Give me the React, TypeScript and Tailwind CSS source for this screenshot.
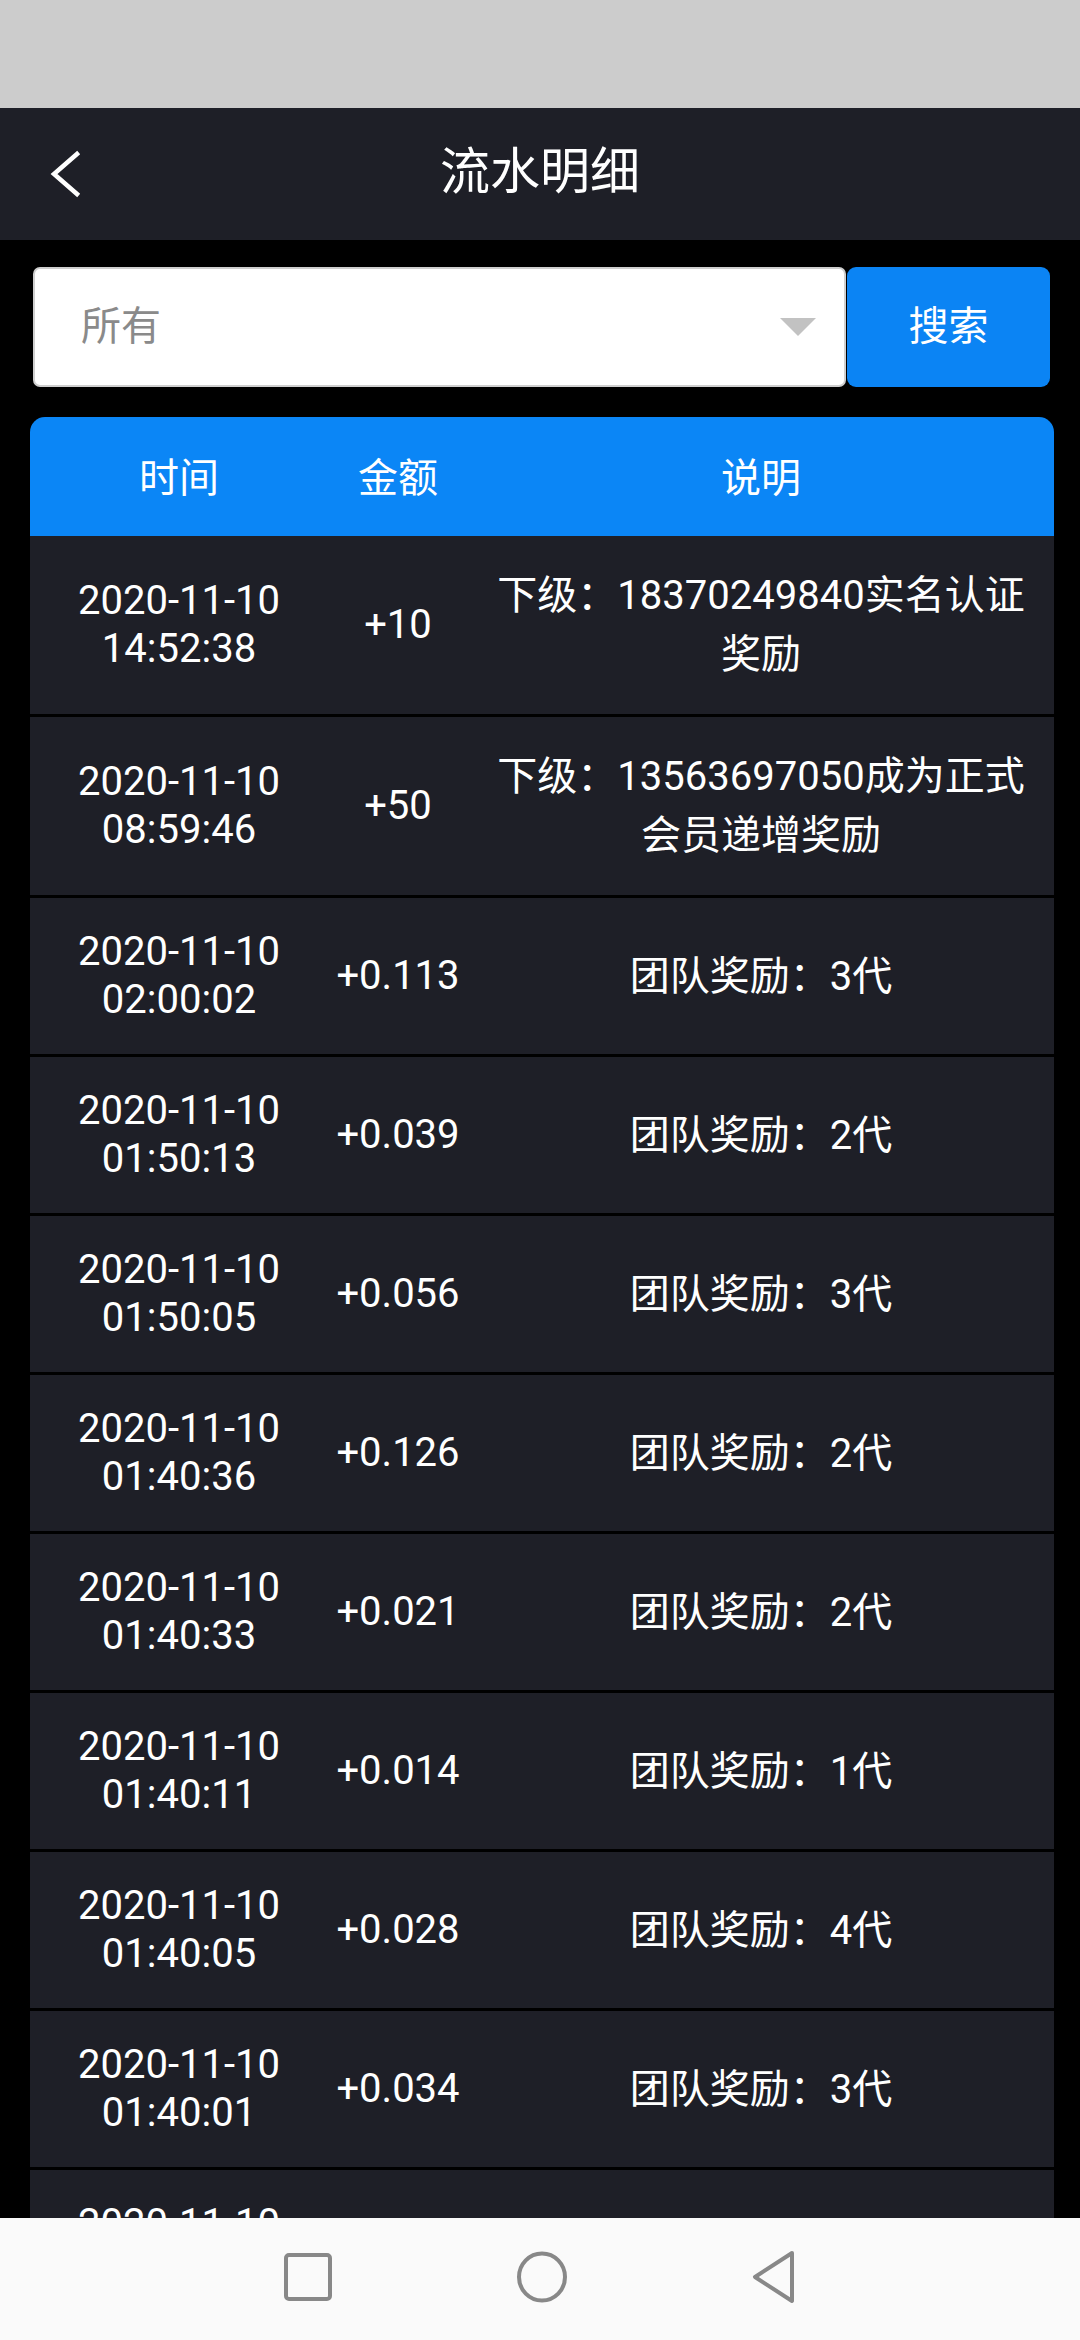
import React from "react";

const rows = [
  { date: "2020-11-10", time: "14:52:38", amount: "+10", desc: "下级：18370249840实名认证奖励" },
  { date: "2020-11-10", time: "08:59:46", amount: "+50", desc: "下级：13563697050成为正式会员递增奖励" },
  { date: "2020-11-10", time: "02:00:02", amount: "+0.113", desc: "团队奖励：3代" },
  { date: "2020-11-10", time: "01:50:13", amount: "+0.039", desc: "团队奖励：2代" },
  { date: "2020-11-10", time: "01:50:05", amount: "+0.056", desc: "团队奖励：3代" },
  { date: "2020-11-10", time: "01:40:36", amount: "+0.126", desc: "团队奖励：2代" },
  { date: "2020-11-10", time: "01:40:33", amount: "+0.021", desc: "团队奖励：2代" },
  { date: "2020-11-10", time: "01:40:11", amount: "+0.014", desc: "团队奖励：1代" },
  { date: "2020-11-10", time: "01:40:05", amount: "+0.028", desc: "团队奖励：4代" },
  { date: "2020-11-10", time: "01:40:01", amount: "+0.034", desc: "团队奖励：3代" },
  { date: "2020-11-10", time: "01:30:52", amount: "+0.017", desc: "团队奖励：2代" },
];

export default function App() {
  return (
    <div className="w-[1080px] h-[2340px] flex flex-col bg-black overflow-hidden font-['Roboto','Noto_Sans_CJK_SC',sans-serif] text-white">
      {/* status bar */}
      <div className="h-[108px] shrink-0 bg-[#cccccc]" />

      {/* title bar */}
      <header className="h-[132px] shrink-0 bg-[#1e1f27] flex items-center">
        <div className="w-[130px] pl-[48px] flex items-center">
          <svg width="34" height="48" viewBox="0 0 34 48" fill="none">
            <path d="M29 4 L6 24 L29 44" stroke="white" strokeWidth="4.5" strokeLinecap="square" />
          </svg>
        </div>
        <h1 className="flex-1 text-center text-[50px] leading-none pr-[130px] -mt-[4px]">流水明细</h1>
      </header>

      {/* content */}
      <main className="flex-1 overflow-hidden">
        <div className="flex pl-[33px] pr-[30px] pt-[27px]">
          <div className="flex-1 h-[120px] bg-white border-2 border-[#cfcfcf] rounded-[7px] flex items-center justify-between pl-[46px] pr-[28px]">
            <span className="text-[40px] text-[#8a8a8a]">所有</span>
            <svg width="36" height="18" viewBox="0 0 36 18">
              <polygon points="0,0 36,0 18,18" fill="#c2c2c2" />
            </svg>
          </div>
          <button className="w-[203px] h-[120px] ml-[1px] bg-[#0b84f4] rounded-[9px] text-[40px] text-white">搜索</button>
        </div>

        <div className="ml-[30px] mr-[26px] mt-[30px]">
          <div className="h-[119px] pt-[5px] bg-[#0b86f6] rounded-t-[15px] flex items-center text-[40px]">
            <div className="w-[298px] text-center">时间</div>
            <div className="w-[140px] text-center">金额</div>
            <div className="flex-1 text-center">说明</div>
          </div>
          <div className="flex flex-col gap-[3px]">
            {rows.map((r, i) => (
              <div key={i} className="bg-[#1e1f27] flex items-center py-[30px] text-[40px]">
                <div className="w-[298px] text-center leading-[48px]">
                  <div>{r.date}</div>
                  <div>{r.time}</div>
                </div>
                <div className="w-[140px] text-center leading-[48px]">{r.amount}</div>
                <div className="flex-1 text-center leading-[59px] px-[18px]">{r.desc}</div>
              </div>
            ))}
          </div>
        </div>
      </main>

      {/* navigation bar */}
      <nav className="h-[122px] shrink-0 bg-[#fafafa] flex items-center justify-center gap-[183px] pb-[4px]">
        <svg width="50" height="50" viewBox="0 0 50 50" fill="none">
          <rect x="3" y="3" width="44" height="44" rx="3" stroke="#888888" strokeWidth="4" />
        </svg>
        <svg width="52" height="52" viewBox="0 0 52 52" fill="none">
          <ellipse cx="26" cy="26" rx="23" ry="23.5" stroke="#888888" strokeWidth="4" />
        </svg>
        <svg width="46" height="54" viewBox="0 0 46 54" fill="none">
          <path d="M41 3 L4 27 L41 51 Z" stroke="#888888" strokeWidth="4" strokeLinejoin="round" />
        </svg>
      </nav>
    </div>
  );
}
